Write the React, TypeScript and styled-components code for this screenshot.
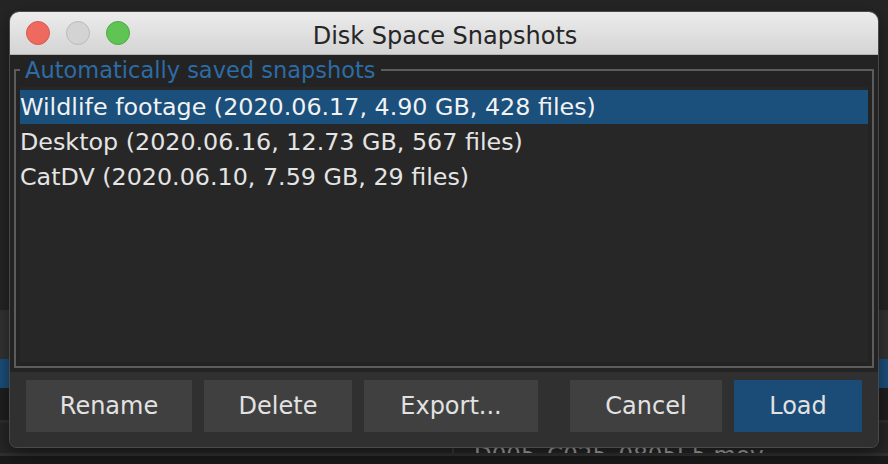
import React from "react";
import styled, { createGlobalStyle } from "styled-components";

const Global = createGlobalStyle`
  html, body { margin: 0; padding: 0; background: #1e1e1e; }
  body {
    width: 888px; height: 464px; overflow: hidden;
    font-family: "DejaVu Sans", "Liberation Sans", sans-serif;
    -webkit-font-smoothing: antialiased;
  }
  * { box-sizing: border-box; }
`;

/* ---------- background application (behind the dialog) ---------- */
const Desktop = styled.div`
  position: relative;
  width: 888px;
  height: 464px;
  overflow: hidden;
  background: #1c1c1c;
  display: flex;
  flex-direction: column;
`;

const BgHeader = styled.div`
  height: 313px;
  background: #252525;
  padding: 7px 0 0 212px;
  color: #bdbdbd;
  font-size: 24px;
  line-height: 28px;
`;

const BgRow = styled.div<{ $bg: string; $h: number }>`
  height: ${(p) => p.$h}px;
  background: ${(p) => p.$bg};
  flex-shrink: 0;
`;

const BgFileRow = styled.div`
  height: 30px;
  display: grid;
  grid-template-columns: 452px 2px 1fr;
  background: #262626;
  flex-shrink: 0;
`;

const BgCell = styled.div`
  padding: 18px 0 0 20px;
  color: #a8a8a8;
  font-size: 23px;
  line-height: 28px;
  white-space: nowrap;
`;

const BgDivider = styled.div`
  background: #3a3a3a;
`;

/* ---------- dialog window ---------- */
const Window = styled.div`
  position: absolute;
  left: 10px;
  top: 12px;
  width: 868px;
  height: 435px;
  border-radius: 9px 9px 7px 7px;
  overflow: hidden;
  display: flex;
  flex-direction: column;
  background: #232323;
  box-shadow: 0 0 0 1px #4a4a4a, 0 6px 18px rgba(0, 0, 0, 0.5);
`;

const TitleBar = styled.div`
  height: 43px;
  flex-shrink: 0;
  position: relative;
  display: flex;
  align-items: center;
  justify-content: center;
  background: linear-gradient(#ececec, #d4d4d4);
  border-bottom: 1px solid #b2b2b2;
`;

const Lights = styled.div`
  position: absolute;
  left: 16px;
  top: 9px;
  display: flex;
  gap: 16px;
`;

const Light = styled.span<{ $fill: string; $edge: string }>`
  width: 24px;
  height: 24px;
  border-radius: 50%;
  background: ${(p) => p.$fill};
  border: 1px solid ${(p) => p.$edge};
`;

const Title = styled.div`
  font-size: 24px;
  color: #262626;
  padding: 5px 0 0 2px;
`;

const Body = styled.div`
  flex: 1;
  display: flex;
  flex-direction: column;
`;

const GroupArea = styled.div`
  flex: 1;
  display: flex;
  padding: 2px 4px 4px 4px;
  background: #232323;
`;

const Group = styled.fieldset`
  flex: 1;
  margin: 0;
  min-width: 0;
  border: 2px solid #5c5c5c;
  padding: 4px;
  display: flex;
`;

const Legend = styled.legend`
  color: #2d6ca6;
  font-size: 22.5px;
  padding: 0 5px 0 5px;
  margin-left: 0;
  line-height: 26px;
`;

const List = styled.div`
  flex: 1;
  background: #272727;
  padding-top: 3px;
  display: flex;
  flex-direction: column;
`;

const Row = styled.div<{ $selected?: boolean }>`
  height: 35px;
  line-height: 34px;
  padding-left: 0;
  font-size: 23.8px;
  white-space: nowrap;
  color: ${(p) => (p.$selected ? "#f2f2f2" : "#e4e4e4")};
  background: ${(p) => (p.$selected ? "#1b4f7c" : "transparent")};
  background-clip: content-box;
  padding-bottom: ${(p) => (p.$selected ? 1 : 0)}px;
`;

const ButtonStrip = styled.div`
  height: 75px;
  flex-shrink: 0;
  display: flex;
  align-items: flex-start;
  padding: 8px 16px 0 16px;
  background: #303030;
`;

const Button = styled.button<{ $w: number; $primary?: boolean; $gapLeft?: number }>`
  width: ${(p) => p.$w}px;
  height: 52px;
  margin-left: ${(p) => p.$gapLeft ?? 0}px;
  border: none;
  border-radius: 0;
  padding: 0;
  font-family: inherit;
  font-size: 24px;
  color: #e2e2e2;
  background: ${(p) => (p.$primary ? "#1b4c78" : "#404040")};
`;

const rows = [
  "Wildlife footage (2020.06.17, 4.90 GB, 428 files)",
  "Desktop (2020.06.16, 12.73 GB, 567 files)",
  "CatDV (2020.06.10, 7.59 GB, 29 files)",
];

export default function App() {
  return (
    <>
      <Global />
      <Desktop>
        <BgHeader>Nov 2, 2014 11:22:00</BgHeader>
        <BgRow $bg="#323232" $h={49} />
        <BgRow $bg="#1b4e7a" $h={29} />
        <BgRow $bg="#1f1f1f" $h={32} />
        <BgRow $bg="#2e2e2e" $h={3} />
        <BgFileRow>
          <div />
          <BgDivider />
          <BgCell>D005_C025_0805E5.mov</BgCell>
        </BgFileRow>
        <BgRow $bg="#303030" $h={3} />
        <BgRow $bg="#1a1a1a" $h={8} />

        <Window>
          <TitleBar>
            <Lights>
              <Light $fill="#ee6a5f" $edge="#d65a4e" />
              <Light $fill="#d3d3d3" $edge="#bababa" />
              <Light $fill="#5fc454" $edge="#4fa944" />
            </Lights>
            <Title>Disk Space Snapshots</Title>
          </TitleBar>
          <Body>
            <GroupArea>
              <Group>
                <Legend>Automatically saved snapshots</Legend>
                <List>
                  {rows.map((r, i) => (
                    <Row key={r} $selected={i === 0}>
                      {r}
                    </Row>
                  ))}
                </List>
              </Group>
            </GroupArea>
            <ButtonStrip>
              <Button $w={166}>Rename</Button>
              <Button $w={148} $gapLeft={12}>Delete</Button>
              <Button $w={174} $gapLeft={12}>Export...</Button>
              <Button $w={152} $gapLeft={32}>Cancel</Button>
              <Button $w={128} $gapLeft={12} $primary>
                Load
              </Button>
            </ButtonStrip>
          </Body>
        </Window>
      </Desktop>
    </>
  );
}
